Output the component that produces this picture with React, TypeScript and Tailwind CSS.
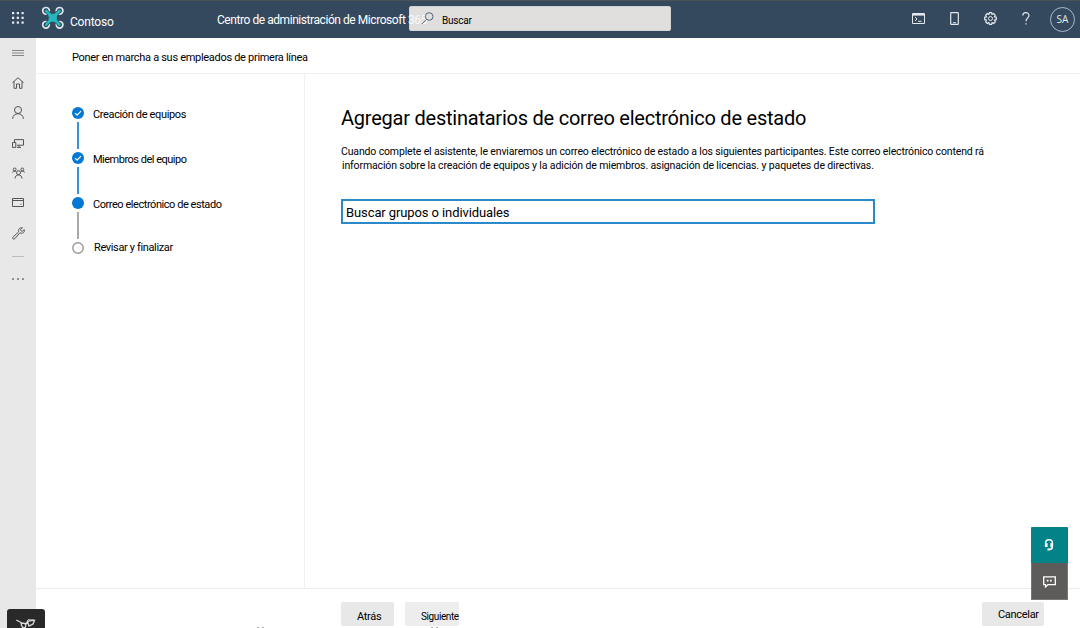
import type { ReactNode } from 'react';

type IconProps = { children: ReactNode; className?: string; box?: string };

function Icon({ children, className = 'size-3', box = '0 0 12 12' }: IconProps) {
  return (
    <svg viewBox={box} className={className} fill="none" stroke="currentColor" strokeWidth="1">
      {children}
    </svg>
  );
}

function Logo() {
  return (
    <svg viewBox="0 0 24 24" className="size-6" fill="none">
      <g stroke="#dce7ec" strokeWidth="1.7">
        <circle cx="5" cy="4.8" r="3.3" />
        <circle cx="18.6" cy="4.8" r="3.3" />
        <circle cx="5" cy="18.8" r="3.3" />
        <circle cx="18.6" cy="18.8" r="3.3" />
      </g>
      <path d="M5.2 5L18.4 18.6M18.4 5L5.2 18.6" stroke="#34495e" strokeWidth="4" />
      <path d="M5.2 5L18.4 18.6M18.4 5L5.2 18.6" stroke="#24b8bb" strokeWidth="2.6" strokeLinecap="round" />
      <path d="M7.5 7.3Q11.8 9.6 16.1 7.3Q14.6 11.8 16.1 16.3Q11.8 14 7.5 16.3Q9 11.8 7.5 7.3Z" fill="#24b8bb" stroke="#24b8bb" strokeWidth=".8" />
    </svg>
  );
}

function Header() {
  return (
    <header className="flex h-[38px] shrink-0 border-t border-[#4d5257] bg-[#34495e] text-white">
      <div className="flex w-9 items-center justify-center">
        <svg viewBox="0 0 12 12" className="mb-[3px] size-3" fill="#e8eef2">
          {[0, 4.75, 9.5].map((y) =>
            [0, 4.75, 9.5].map((x) => <rect key={`${x}-${y}`} x={x} y={y} width="2.2" height="2.2" />),
          )}
        </svg>
      </div>
      <div className="ml-[5px] mt-[5px] w-6"><Logo /></div>
      <span className="ml-[5px] mt-[13px] w-[147px] text-[12px] leading-[16px] tracking-[-0.2px]">Contoso</span>
      <div className="relative z-10 mt-[11px] w-[192px] whitespace-nowrap text-[12px] leading-[16px] tracking-[-0.44px]">
        Centro de administración de Microsoft <span className="text-[#f8f8f8]">365</span>
      </div>
      <div className="mt-[5px] flex h-[25px] w-[262px] rounded-[2px] border border-[#d2d2d2] bg-[#e1dfdd] text-black">
        <Icon className="relative z-20 ml-[11px] mr-[8px] mt-[5px] size-[13px] text-[#506579]" box="0 0 13 13">
          <circle cx="8.2" cy="4.5" r="3.8" /><path d="M5.5 7.3L.8 12" />
        </Icon>
        <span className="mt-[6px] text-[10px] leading-[16px] tracking-[-0.2px]">Buscar</span>
      </div>
      <div className="ml-auto flex h-9 items-center text-[#e2e8ec]">
        <Icon className="mb-[2px] mr-[25px] h-[11px] w-[13px]" box="0 0 13 11">
          <path d="M.5 .5H12.5V10.5H.5ZM.5 2H12.5M3 4L5 6L3 8M6 8.3H9.5" /><path d="M1 1.4H12" strokeWidth="1.6" />
        </Icon>
        <Icon className="mb-[2px] mr-[25px] h-[13px] w-[9px]" box="0 0 9 13">
          <rect x=".7" y=".6" width="7.6" height="11.8" rx=".6" strokeWidth="1.2" /><path d="M3 10.7H6" />
        </Icon>
        <Icon className="mb-[2px] mr-[25px] size-[13px]" box="0 0 13 13">
          <path d="M5.4 .7H7.6L8 2.4L9.5 1.5L11.2 3.2L10.5 4.8L12.3 5.3V7.7L10.5 8.2L11.3 9.8L9.7 11.4L8.1 10.6L7.6 12.3H5.4L4.9 10.6L3.3 11.4L1.7 9.8L2.5 8.2L.7 7.7V5.3L2.5 4.8L1.7 3.2L3.3 1.6L4.9 2.4Z" strokeWidth="1.2" />
          <circle cx="6.5" cy="6.5" r="2" />
        </Icon>
        <Icon className="mb-[2px] mr-[20px] h-[13px] w-[8px]" box="0 0 8 13">
          <path d="M.8 3.6C.8-.2 7-.3 7 3.5C7 5.8 4 6 4 9.2" strokeWidth="1.2" /><path d="M4 11.2V12.6" strokeWidth="1.3" />
        </Icon>
        <div className="mr-[5px] mt-px flex size-[25px] items-center justify-center rounded-full border border-[#a8bac7] font-['Open_Sans',sans-serif] text-[10px]">SA</div>
      </div>
    </header>
  );
}

function Sidebar() {
  return (
    <nav className="flex w-9 shrink-0 flex-col items-center bg-[#e8e8e8] text-[#555]">
      <Icon className="mt-[11px] h-[8px] w-3 text-[#858585]" box="0 0 12 8"><path d="M0 1.5H12M0 4H12M0 6.5H12" /></Icon>
      <Icon className="mt-[20px] size-3"><path d="M.5 5.6L6 .8L11.5 5.6M2 4.5V11.3H4.5V7H7.5V11.3H10V4.5" /></Icon>
      <Icon className="mt-[17px] h-[13px] w-3" box="0 0 12 13"><circle cx="6" cy="4" r="3.5" /><path d="M.6 12.8C.8 6 11.2 6 11.4 12.8" /></Icon>
      <Icon className="mt-[20px] h-[9px] w-3" box="0 0 12 9"><path d="M2.5 3V.6H11.5V6.2H5M.5 3.5H3.8V8.4H.5ZM5 8.4H9M7 6.2V8.4" /></Icon>
      <Icon className="mt-[19px] h-3 w-[13px]" box="0 0 13 12">
        <circle cx="6.5" cy="5.7" r="2" /><path d="M3 11.5C3 6.8 10 6.8 10 11.5M.5 5.5C.5 4 3 3.4 4.4 5M12.5 5.5C12.5 4 10 3.4 8.6 5" />
        <circle cx="2.7" cy="2.4" r="1.4" /><circle cx="10.3" cy="2.4" r="1.4" />
      </Icon>
      <Icon className="mt-[19px] h-[9px] w-3" box="0 0 12 9"><path d="M.5 .5H11.5V8.5H.5ZM.5 2.5H11.5M8.5 6.2H9.5" /></Icon>
      <Icon className="mt-[20px] size-[13px]" box="0 0 13 13"><path d="M8 5.8L2.8 11.7C1.4 13 -.1 11.2 1.2 9.9L6.7 4.8C6 2.3 7.8 .1 10.4 .8L8.4 2.8L10.2 4.6L12.2 2.6C13.3 5 10.3 7.2 8 5.8Z" /></Icon>
      <div className="mt-[16px] h-px w-3 bg-[#bcbcbc]" />
      <Icon className="mt-[21px] h-[2px] w-3" box="0 0 12 2"><path d="M.2 1H1.8M5.2 1H6.8M10.2 1H11.8" strokeWidth="1.5" /></Icon>
    </nav>
  );
}

const steps = [
  { label: 'Creación de equipos', state: 'done', text: 'ml-[9.5px] tracking-[-0.36px]' },
  { label: 'Miembros del equipo', state: 'done', text: 'ml-[9.5px] tracking-[-0.5px]' },
  { label: 'Correo electrónico de estado', state: 'current', text: 'ml-[9.5px] tracking-[-0.45px]' },
  { label: 'Revisar y finalizar', state: 'todo', text: 'mt-[-2px] ml-[10.5px] tracking-[-0.36px]' },
];

function Steps() {
  return (
    <aside className="w-[269px] shrink-0 border-r border-[#f0f0f0] pl-[35.5px] pt-[33px]">
      {steps.map((step, i) => (
        <div key={step.label} className="flex h-[45px]">
          <div className="flex w-3 flex-col items-center">
            <svg viewBox="0 0 12 12" className="size-3 shrink-0" fill="none">
              {step.state === 'todo' ? (
                <circle cx="6" cy="6" r="5.2" stroke="#9a9896" strokeWidth="1.4" />
              ) : (
                <circle cx="6" cy="6" r="6" fill="#0078d4" />
              )}
              {step.state === 'done' && <path d="M3 6.1L5.1 8.1L9 4.1" stroke="white" strokeWidth="1.2" />}
            </svg>
            {i < 3 && <div className={step.state === 'done' ? 'mt-[3px] h-[27px] w-[2px] bg-[#3a92d8]' : 'mt-[3px] h-[27px] w-[2px] bg-[#a8a8a8]'} />}
          </div>
          <span className={`${step.text} whitespace-nowrap text-[11px] leading-[16px]`}>{step.label}</span>
        </div>
      ))}
    </aside>
  );
}

export default function App() {
  return (
    <div className="relative flex h-[628px] w-[1080px] flex-col overflow-hidden bg-white font-[Roboto,sans-serif] text-black">
      <Header />
      <div className="flex min-h-0 flex-1">
        <Sidebar />
        <div className="flex min-w-0 flex-1 flex-col">
          <div className="h-9 shrink-0 border-b border-[#f0f0f0] pl-9 pt-[12px] text-[11px] leading-[16px] tracking-[-0.3px]">Poner en marcha a sus empleados de primera línea</div>
          <div className="flex min-h-0 flex-1">
            <Steps />
            <main className="pl-9 pt-[30px]">
              <h1 className="whitespace-nowrap text-[20px] leading-[28px] tracking-[-0.23px]">Agregar destinatarios de correo electrónico de estado</h1>
              <div className="mt-[13px] whitespace-nowrap text-[10.5px] leading-[14px]">
                <p className="tracking-[-0.142px]">Cuando complete el asistente, le enviaremos un correo electrónico de estado a los siguientes participantes. Este correo electrónico contend rá</p>
                <p className="pl-px tracking-[-0.128px]">información sobre la creación de equipos y la adición de miembros. asignación de licencias. y paquetes de directivas.</p>
              </div>
              <div className="mt-[26px] h-[25px] w-[534px] border-2 border-[#2b88c9] pl-[3px] pt-px text-[13px] leading-[22px] tracking-[-0.1px]">Buscar grupos o individuales</div>
            </main>
          </div>
          <footer className="flex h-10 shrink-0 border-t border-[#ededed] pl-[305px] pt-[13px] text-[11px] leading-[16px]">
            <button className="flex h-6 w-[53px] rounded-[2px] bg-[#e8e8e8] pl-4 pt-[7px] tracking-[-0.3px]">Atrás</button>
            <button className="ml-[11px] flex h-6 w-[54px] rounded-[2px] bg-[#ededed] pl-4 pt-[7px] text-[10px] tracking-[-0.4px]">Siguiente</button>
            <button className="ml-auto mr-9 flex h-6 w-[62px] rounded-[2px] bg-[#e8e8e8] pl-4 pt-[5px] tracking-[-0.3px]">Cancelar</button>
          </footer>
        </div>
      </div>
      <div className="absolute left-[1031px] top-[527px] flex w-[37px] flex-col text-white">
        <div className="flex h-9 items-center justify-center rounded-t-[1px] bg-[#038387]">
          <Icon className="mr-px h-3 w-[10px]" box="0 0 10 12">
            <path d="M1.6 7.5V4A3.2 3 0 0 1 8.4 4V7.5C8.4 9.3 7.4 10.4 5.5 10.4H4.2" strokeWidth="1.5" /><path d="M2.4 4.2V8M7.6 4.2V8" strokeWidth="2.4" /><path d="M3.4 10.4H6" strokeWidth="1.8" />
          </Icon>
        </div>
        <div className="flex h-[37px] items-center justify-center border border-t-0 border-[#777] bg-[#5d5c5a]">
          <Icon className="mt-px h-[12px] w-[13px]" box="0 0 13 12">
            <path d="M.7 .8H12.3V8.6H5L2.5 11V8.6H.7Z" strokeWidth="1.3" /><path d="M3.8 4.7H5.5M7 4.7H8.7" strokeWidth="1.7" />
          </Icon>
        </div>
      </div>
      <div className="absolute left-[7px] top-[609px] h-[22px] w-[38px] rounded-[3px] bg-[#292929] text-[#ddd]">
        <Icon className="absolute left-[9px] top-[9px] h-[11px] w-5" box="0 0 20 11">
          <path d="M.3 2L6.5 5.3M5 5L10 5.5L9.5 9C7 11 5.5 9 5 5ZM10 5.5L12.5 3L18.5 2.2L17 6L13 8L12 5Z" strokeWidth="1.3" /><path d="M11 4L12 1.8L18 2" strokeWidth="1" />
        </Icon>
      </div>
      <svg viewBox="0 0 184 1" className="absolute left-[256px] top-[627px] h-px w-[184px]" stroke="#aaa"><path d="M1 .5H3M6 .5H8M175 .5H177M180 .5H182" /></svg>
    </div>
  );
}
